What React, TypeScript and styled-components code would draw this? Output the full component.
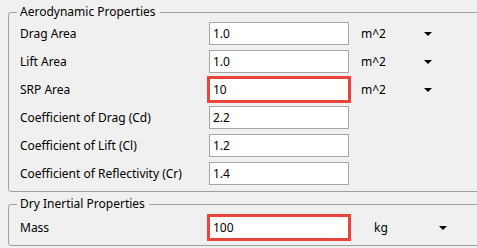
import React from "react";
import styled, { createGlobalStyle } from "styled-components";

const GlobalStyle = createGlobalStyle`
  html, body {
    margin: 0;
    padding: 0;
    background: #f0f0f0;
    overflow: hidden;
  }
  body {
    font-family: "Noto Sans", "DejaVu Sans", sans-serif;
    font-size: 12px;
    color: #000;
  }
`;

const Page = styled.div`
  display: flex;
  flex-direction: column;
  gap: 4px;
  padding: 4px 0 0 8px;
  width: 500px;
`;

const Group = styled.fieldset<{ $padTop: number }>`
  margin: 0;
  border: 1px solid #a0a0a0;
  border-radius: 3px;
  padding: ${(p) => p.$padTop}px 11px 6px 11px;
  display: flex;
  flex-direction: column;
  gap: 5px;
`;

const Legend = styled.legend`
  padding: 0 4px 0 3px;
  margin-left: -3px;
  line-height: 16px;
  font-size: 12px;
`;

const Row = styled.div`
  display: grid;
  grid-template-columns: 189px 140px auto;
  align-items: center;
  height: 23px;
`;

const Label = styled.span`
  white-space: nowrap;
`;

const Input = styled.input<{ $error?: boolean }>`
  box-sizing: border-box;
  width: 140px;
  height: 23px;
  margin: 0;
  padding: 0 3px;
  border: 1px solid ${(p) => (p.$error ? "#e8453c" : "#a6a6a6")};
  box-shadow: ${(p) => (p.$error ? "0 0 0 2px #e8453c" : "none")};
  background: #fff;
  font-family: inherit;
  font-size: 12px;
  color: #000;
  outline: none;
`;

const Unit = styled.div<{ $offset: number; $width: number }>`
  display: flex;
  align-items: center;
  justify-content: space-between;
  margin-left: ${(p) => p.$offset}px;
  width: ${(p) => p.$width}px;
`;

const Arrow = styled.span`
  width: 0;
  height: 0;
  margin-top: 1px;
  border-left: 4px solid transparent;
  border-right: 4px solid transparent;
  border-top: 4px solid #000;
`;

type Field = { label: string; value: string; unit?: string; error?: boolean };

const aero: Field[] = [
  { label: "Drag Area", value: "1.0", unit: "m^2" },
  { label: "Lift Area", value: "1.0", unit: "m^2" },
  { label: "SRP Area", value: "10", unit: "m^2", error: true },
  { label: "Coefficient of Drag (Cd)", value: "2.2" },
  { label: "Coefficient of Lift (Cl)", value: "1.2" },
  { label: "Coefficient of Reflectivity (Cr)", value: "1.4" },
];

const FieldRow = ({ f, offset, width }: { f: Field; offset: number; width: number }) => (
  <Row>
    <Label>{f.label}</Label>
    <Input $error={f.error} defaultValue={f.value} />
    {f.unit ? (
      <Unit $offset={offset} $width={width}>
        <span>{f.unit}</span>
        <Arrow />
      </Unit>
    ) : (
      <span />
    )}
  </Row>
);

export default function App() {
  return (
    <>
      <GlobalStyle />
      <Page>
        <Group $padTop={2}>
          <Legend>Aerodynamic Properties</Legend>
          {aero.map((f) => (
            <FieldRow key={f.label} f={f} offset={12} width={71} />
          ))}
        </Group>
        <Group $padTop={4}>
          <Legend>Dry Inertial Properties</Legend>
          <FieldRow f={{ label: "Mass", value: "100", unit: "kg", error: true }} offset={25} width={73} />
        </Group>
      </Page>
    </>
  );
}
